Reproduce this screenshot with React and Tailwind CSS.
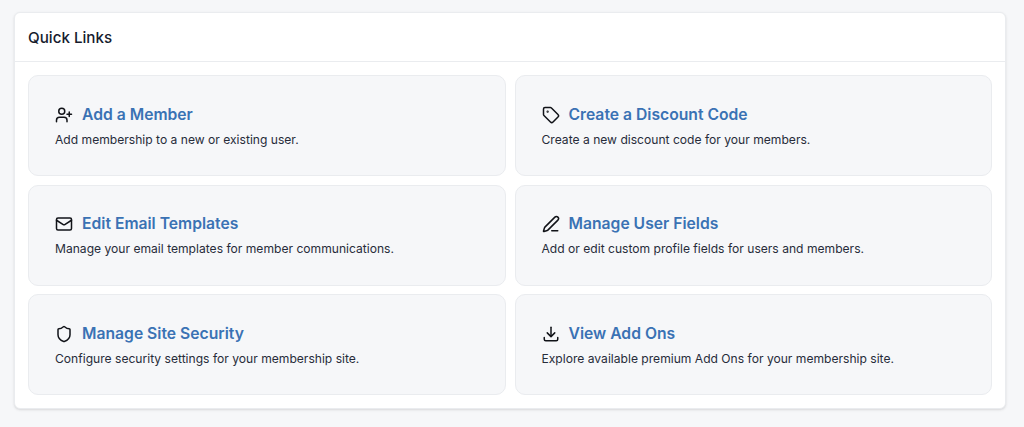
import { UserPlus, Tag, Mail, PenLine, Shield } from 'lucide-react';

const DownloadTray = ({ className, strokeWidth = 2 }) => (
  <svg className={className} viewBox="0 0 24 24" fill="none" stroke="currentColor" strokeWidth={strokeWidth} strokeLinecap="round" strokeLinejoin="round">
    <path d="M12 3v12" />
    <path d="M7 10.5l5 5 5-5" />
    <path d="M3 16.5V19a2 2 0 0 0 2 2h14a2 2 0 0 0 2-2v-2.5" />
  </svg>
);

const links = [
  { icon: UserPlus, title: 'Add a Member', text: 'Add membership to a new or existing user.' },
  { icon: Tag, title: 'Create a Discount Code', text: 'Create a new discount code for your members.' },
  { icon: Mail, title: 'Edit Email Templates', text: 'Manage your email templates for member communications.' },
  { icon: PenLine, title: 'Manage User Fields', text: 'Add or edit custom profile fields for users and members.' },
  { icon: Shield, title: 'Manage Site Security', text: 'Configure security settings for your membership site.' },
  { icon: DownloadTray, title: 'View Add Ons', text: 'Explore available premium Add Ons for your membership site.' },
];

const App = () => {
  return (
    <div className="min-h-[427px] bg-[#f6f7f9] pl-[14px] pr-[18px] pt-3 font-['Inter',sans-serif]">
      <div className="rounded-md border border-[#eaecef] bg-white shadow-sm">
        <div className="flex h-[49px] items-center border-b border-[#eaecef] px-[13px] pt-[2px]">
          <h2 className="text-[15.2px] font-medium text-[#161b2e]">Quick Links</h2>
        </div>
        <div className="grid grid-cols-2 gap-x-[9px] gap-y-[8.5px] p-[13px]">
          {links.map(({ icon: Icon, title, text }) => (
            <a key={title} href="#" className="flex h-[101px] flex-col justify-center rounded-[10px] border border-[#eaecef] bg-[#f6f7f9] px-[26px] pt-px">
              <div className="flex items-center gap-[9px]">
                <Icon className="h-[18px] w-[18px] text-[#111318]" strokeWidth={2} />
                <span className="text-[15.7px] font-semibold leading-6 text-[#3a72b4]">{title}</span>
              </div>
              <p className="mt-[3px] text-[12.1px] leading-5 text-[#272c3a]">{text}</p>
            </a>
          ))}
        </div>
      </div>
    </div>
  );
};

export default App;
